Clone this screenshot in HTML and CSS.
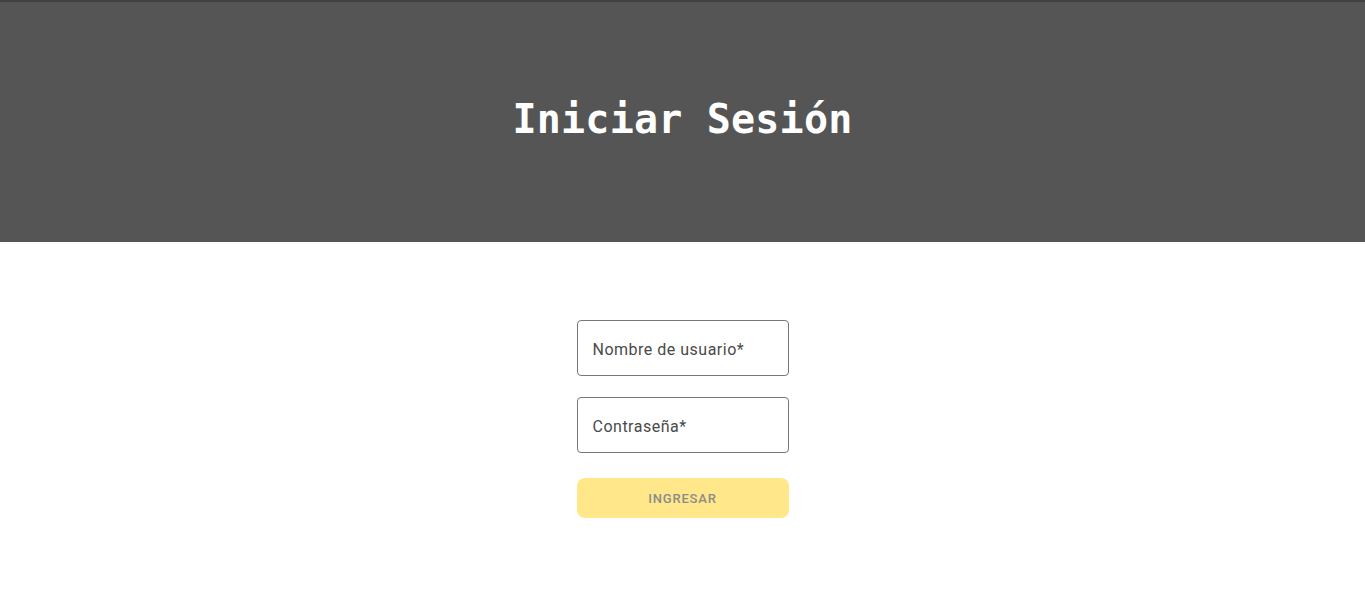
FILE: index.html
```html
<!DOCTYPE html>
<html lang="es">
<head>
<meta charset="utf-8">
<title>Iniciar Sesión</title>
<link rel="stylesheet" href="styles.css">
</head>
<body>
<header class="hero">
  <h1 class="hero-title">Iniciar Sesión</h1>
</header>
<main class="content">
  <form class="login-form">
    <label class="field"><span class="field-label">Nombre de usuario*</span></label>
    <label class="field"><span class="field-label">Contraseña*</span></label>
    <button type="button" class="submit" disabled>INGRESAR</button>
  </form>
</main>
</body>
</html>
```

FILE: styles.css
```css
html, body {
  margin: 0;
  padding: 0;
  background: #ffffff;
  font-family: Roboto, "Noto Sans", sans-serif;
}
.hero {
  height: 240px;
  background: #555555;
  border-top: 2px solid #3f3f44;
  display: flex;
  align-items: center;
  justify-content: center;
}
.hero-title {
  margin: 0;
  margin-top: -6px;
  color: #ffffff;
  font-family: "DejaVu Sans Mono", "Liberation Mono", monospace;
  font-weight: bold;
  font-size: 40px;
  letter-spacing: 0.2px;
}
.content {
  display: flex;
  justify-content: center;
  padding-top: 78px;
}
.login-form {
  width: 212px;
  display: flex;
  flex-direction: column;
}
.field {
  box-sizing: border-box;
  height: 56px;
  border: 1px solid #777777;
  border-radius: 4px;
  display: flex;
  align-items: center;
  padding: 2px 15px 0;
  margin-bottom: 21px;
}
.field-label {
  font-size: 16px;
  color: #4a4a4a;
  letter-spacing: 0.5px;
}
.submit {
  margin-top: 4px;
  height: 40px;
  border: none;
  border-radius: 8px;
  background: #ffe78a;
  color: #8c8c8c;
  font-family: Roboto, sans-serif;
  font-weight: 500;
  font-size: 13px;
  letter-spacing: 0.8px;
  padding: 0;
}
```
